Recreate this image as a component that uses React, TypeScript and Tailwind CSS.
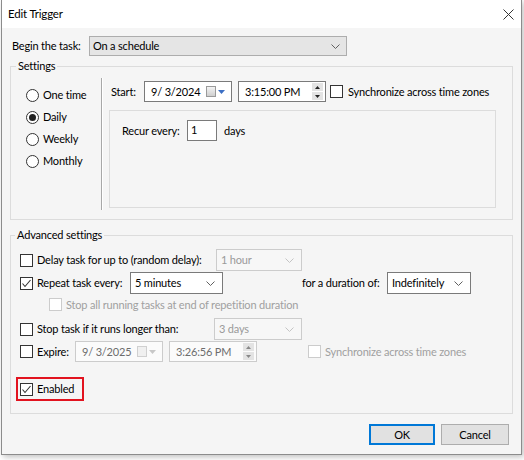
import React from "react";

function Chevron({ disabled = false }: { disabled?: boolean }) {
  return (
    <svg width="9" height="5" viewBox="0 0 9 5" className="shrink-0">
      <polyline
        points="0.5,0.5 4.5,4.5 8.5,0.5"
        fill="none"
        stroke={disabled ? "#c4c4c4" : "#606060"}
        strokeWidth="1"
      />
    </svg>
  );
}

function Combo({
  value,
  w,
  disabled = false,
}: {
  value: string;
  w: string;
  disabled?: boolean;
}) {
  return (
    <div
      className={`flex h-[22px] items-center justify-between border pl-[4px] pr-[7px] ${w} ${
        disabled
          ? "border-[#cccccc] bg-[#f7f7f7] text-[#9a9a9a]"
          : "border-[#7a7a7a] bg-white text-black"
      }`}
    >
      <span>{value}</span>
      <Chevron disabled={disabled} />
    </div>
  );
}

function Checkbox({
  checked = false,
  disabled = false,
}: {
  checked?: boolean;
  disabled?: boolean;
}) {
  return (
    <div
      className={`flex h-[13px] w-[13px] shrink-0 items-center justify-center border bg-white ${
        disabled ? "border-[#cccccc]" : "border-[#333333]"
      }`}
    >
      {checked && (
        <svg width="11" height="11" viewBox="0 0 11 11">
          <polyline
            points="1.5,5.5 4,8.5 9.5,2"
            fill="none"
            stroke="#333"
            strokeWidth="1.1"
          />
        </svg>
      )}
    </div>
  );
}

function Radio({ label, checked = false }: { label: string; checked?: boolean }) {
  return (
    <div className="flex h-[22px] items-center">
      <div className="flex h-[13px] w-[13px] items-center justify-center rounded-full border border-[#333333] bg-white">
        {checked && <div className="h-[7px] w-[7px] rounded-full bg-[#222]" />}
      </div>
      <span className="ml-[4px]">{label}</span>
    </div>
  );
}

function DateBox({ value, disabled = false }: { value: string; disabled?: boolean }) {
  return (
    <div
      className={`flex h-[21px] w-[88px] items-center border pl-[6px] pr-[6px] ${
        disabled
          ? "border-[#cccccc] bg-[#fbfbfb] text-[#6d6d6d]"
          : "border-[#7a7a7a] bg-white text-black"
      }`}
    >
      <span className="flex-1">{value}</span>
      <div
        className={`h-[11px] w-[10px] border ${
          disabled
            ? "border-[#d0d0d0] bg-[#f0f0f0]"
            : "border-[#9a9a9a] bg-gradient-to-b from-[#f4f4f4] to-[#cfcfcf]"
        }`}
      />
      <svg width="7" height="4" viewBox="0 0 7 4" className="ml-[2px]">
        <polygon points="0,0 7,0 3.5,4" fill={disabled ? "#c8c8c8" : "#3c6fc4"} />
      </svg>
    </div>
  );
}

function TimeBox({ value, disabled = false }: { value: string; disabled?: boolean }) {
  return (
    <div
      className={`flex h-[21px] w-[88px] items-center border pl-[6px] pr-[2px] ${
        disabled
          ? "border-[#cccccc] bg-[#fbfbfb] text-[#6d6d6d]"
          : "border-[#7a7a7a] bg-white text-black"
      }`}
    >
      <span className="flex-1">{value}</span>
      <div className="flex h-[17px] w-[11px] flex-col gap-px">
        <div className="flex flex-1 items-center justify-center bg-[#e3e3e3]">
          <svg width="5" height="3" viewBox="0 0 5 3">
            <polygon points="0,3 5,3 2.5,0" fill={disabled ? "#888" : "#222"} />
          </svg>
        </div>
        <div className="flex flex-1 items-center justify-center bg-[#e3e3e3]">
          <svg width="5" height="3" viewBox="0 0 5 3">
            <polygon points="0,0 5,0 2.5,3" fill={disabled ? "#888" : "#222"} />
          </svg>
        </div>
      </div>
    </div>
  );
}

export default function App() {
  return (
    <div className="h-[460px] w-[524px] overflow-hidden bg-white font-['Lato','Noto_Sans',sans-serif] text-[11px] leading-[16px] tracking-[-0.18px] text-black">
      <div className="ml-px flex h-[455px] w-[521px] flex-col border-x border-b border-[#8c8c8c] shadow-[2px_2px_6px_rgba(0,0,0,0.25)]">
        {/* title bar */}
        <div className="flex h-[28px] shrink-0 items-center justify-between bg-white pl-[6px] pr-[7px]">
          <span className="text-[11.5px]">Edit Trigger</span>
          <svg width="11" height="11" viewBox="0 0 11 11">
            <path d="M0.5 0.5 L10.5 10.5 M10.5 0.5 L0.5 10.5" stroke="#333" strokeWidth="1" />
          </svg>
        </div>

        <div className="flex flex-1 flex-col bg-[#f5f5f5] px-[8px] pt-[8px]">
          <div className="ml-[2px] flex h-[20px] items-center">
            <span className="w-[77px]">Begin the task:</span>
            <div className="flex h-[20px] w-[258px] items-center justify-between border border-[#adadad] bg-[#e5e5e5] pl-[3px] pr-[6px]">
              <span>On a schedule</span>
              <Chevron />
            </div>
          </div>

          <fieldset className="mt-[2px] w-[503px] border border-[#dcdcdc]">
            <legend className="ml-[5px] px-[2px]">Settings</legend>
            <div className="flex h-[145px]">
              <div className="w-[90px] pl-[15px] pt-[10px]">
                <Radio label="One time" />
                <Radio label="Daily" checked />
                <Radio label="Weekly" />
                <Radio label="Monthly" />
              </div>
              <div className="mt-[4px] h-[132px] w-[2px] border-l border-[#a8a8a8] bg-white" />
              <div className="pl-[6px] pt-[7px]">
                <div className="ml-[2px] flex h-[21px] items-center">
                  <span className="w-[33px]">Start:</span>
                  <DateBox value="9/ 3/2024" />
                  <div className="ml-[6px]">
                    <TimeBox value="3:15:00 PM" />
                  </div>
                  <div className="ml-[4px]">
                    <Checkbox />
                  </div>
                  <span className="ml-[5px]">Synchronize across time zones</span>
                </div>
                <div className="mt-[8px] h-[98px] w-[387px] border border-[#dcdcdc] pl-[12px] pt-[9px]">
                  <div className="flex h-[21px] items-center">
                    <span className="w-[65px]">Recur every:</span>
                    <div className="flex h-[21px] w-[30px] items-start border border-[#7a7a7a] bg-white pl-[3px] pt-px">
                      1
                    </div>
                    <span className="ml-[7px]">days</span>
                  </div>
                </div>
              </div>
            </div>
          </fieldset>

          <fieldset className="mt-[7px] w-[503px] border border-[#dcdcdc] pb-[12px]">
            <legend className="ml-[4px] px-[2px]">Advanced settings</legend>
            <div className="pl-[9px]">
              <div className="mt-[6px] flex h-[22px] items-center">
                <Checkbox />
                <span className="ml-[4px] w-[179px]">Delay task for up to (random delay):</span>
                <Combo value="1 hour" w="w-[86px]" disabled />
              </div>
              <div className="mt-px flex h-[22px] items-center">
                <Checkbox checked />
                <span className="ml-[4px] w-[93px]">Repeat task every:</span>
                <Combo value="5 minutes" w="w-[93px]" />
                <span className="ml-[79px] w-[85px]">for a duration of:</span>
                <Combo value="Indefinitely" w="w-[84px]" />
              </div>
              <div className="mt-[2px] flex h-[17px] items-center pl-[29px] text-[#a0a0a0]">
                <Checkbox disabled />
                <span className="ml-[4px]">Stop all running tasks at end of repetition duration</span>
              </div>
              <div className="mt-[5px] flex h-[22px] items-center">
                <Checkbox />
                <span className="ml-[4px] w-[177px]">Stop task if it runs longer than:</span>
                <Combo value="3 days" w="w-[88px]" disabled />
              </div>
              <div className="mt-px flex h-[21px] items-center">
                <Checkbox />
                <span className="ml-[4px] w-[38px]">Expire:</span>
                <DateBox value="9/ 3/2025" disabled />
                <div className="ml-[6px]">
                  <TimeBox value="3:26:56 PM" disabled />
                </div>
                <div className="ml-[51px]">
                  <Checkbox disabled />
                </div>
                <span className="ml-[4px] text-[#a0a0a0]">Synchronize across time zones</span>
              </div>
              <div className="-ml-[4px] mt-[15px] inline-flex h-[24px] items-center border-2 border-[#e2131f] pl-[2px] pr-[8px]">
                <Checkbox checked />
                <span className="ml-[4px]">Enabled</span>
              </div>
            </div>
          </fieldset>

          <div className="mt-[10px] flex justify-end gap-[6px] pr-[4px]">
            <button className="h-[21px] w-[66px] border-2 border-[#0078d7] bg-[#e1e1e1]">OK</button>
            <button className="h-[21px] w-[68px] border border-[#adadad] bg-[#e1e1e1]">Cancel</button>
          </div>
        </div>
      </div>
    </div>
  );
}
